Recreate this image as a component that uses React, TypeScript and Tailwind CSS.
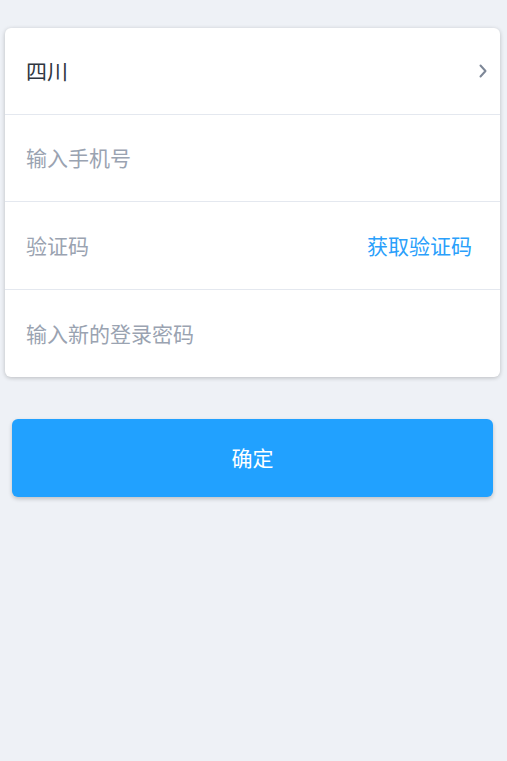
import React from "react";

const App = () => {
    return (
        <div
            className="min-h-[761px] w-full bg-[#eef1f6] pt-[28px]"
            style={{ fontFamily: '"Noto Sans CJK SC", "Noto Sans", sans-serif' }}
        >
            <div className="ml-[5px] mr-[7px] bg-white rounded-[6px] shadow-[0_1px_4px_rgba(0,0,0,0.22)] overflow-hidden">
                <div className="h-[87px] flex items-center justify-between pl-[21px] pr-[12px] border-b border-[#e4e8ef]">
                    <span className="text-[21px] text-[#2f3640]">四川</span>
                    <svg width="10" height="16" viewBox="0 0 10 16" fill="none">
                        <path d="M2.5 2.5 L7.5 8 L2.5 13.5" stroke="#7d8797" strokeWidth="2" strokeLinecap="round" strokeLinejoin="round" />
                    </svg>
                </div>
                <div className="h-[87px] flex items-center pl-[21px] border-b border-[#e4e8ef]">
                    <span className="text-[21px] text-[#9aa3b1]">输入手机号</span>
                </div>
                <div className="h-[88px] flex items-center justify-between pl-[21px] pr-[28px] border-b border-[#e4e8ef]">
                    <span className="text-[21px] text-[#9aa3b1]">验证码</span>
                    <span className="text-[21px] text-[#2a9ffb]">获取验证码</span>
                </div>
                <div className="h-[87px] flex items-center pl-[21px]">
                    <span className="text-[21px] text-[#9aa3b1]">输入新的登录密码</span>
                </div>
            </div>
            <div className="ml-[12px] mr-[14px] mt-[42px]">
                <button className="w-full h-[78px] rounded-[6px] bg-[#21a1ff] text-white text-[21px] shadow-[0_2px_4px_rgba(0,0,0,0.2)]">
                    确定
                </button>
            </div>
        </div>
    );
};

export default App;
